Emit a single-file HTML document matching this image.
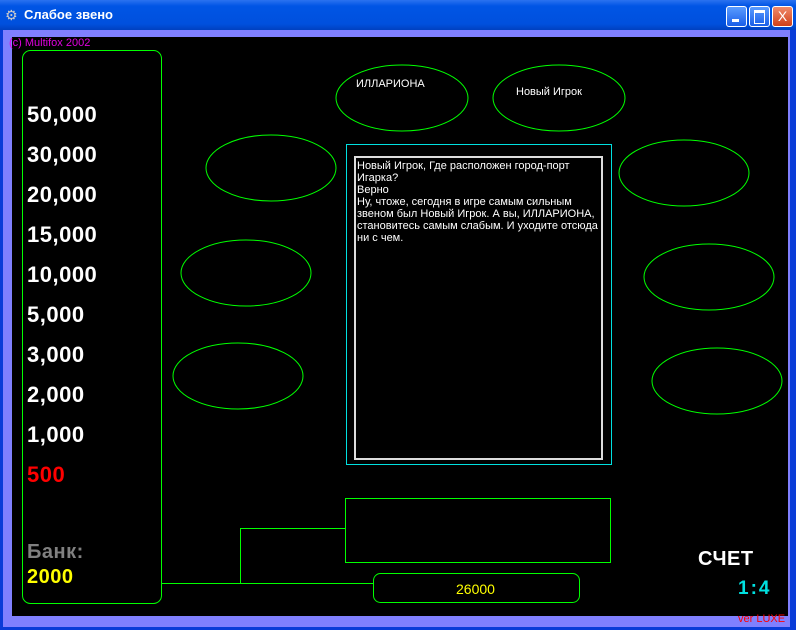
<!DOCTYPE html>
<html><head><meta charset="utf-8"><style>
*{margin:0;padding:0}
body{width:796px;height:630px;overflow:hidden;background:#0a3cd8;position:relative;font-family:"Liberation Sans","DejaVu Sans",sans-serif}
.t{position:absolute;white-space:nowrap}
#title{position:absolute;left:0;top:0;width:796px;height:30px;background:linear-gradient(#2a72f0,#0055e5 20%,#0050dd 80%,#0040c0)}
#frame{position:absolute;left:3px;top:30px;width:787px;height:597px;background:#8080ff}
#black{position:absolute;left:12px;top:37px;width:776px;height:579px;background:#000}
.num{position:absolute;left:27px;font-weight:bold;font-size:22px;color:#fff;line-height:26px;letter-spacing:0.5px}
.btn{position:absolute;top:6px;width:19px;height:19px;border:1px solid #fff;border-radius:3px;background:linear-gradient(#5a9cff,#1a5ee8)}
</style></head><body>
<div id="title"></div>
<div class="t" style="left:5px;top:7px;color:#ccc;font-size:14px">⚙</div>
<div class="t" style="left:24px;top:7px;color:#fff;font-size:13px;font-weight:bold">Слабое звено</div>
<div class="btn" style="left:726px"><div style="position:absolute;left:5px;top:12px;width:7px;height:3px;background:#fff"></div></div>
<div class="btn" style="left:749px"><div style="position:absolute;left:4px;top:3px;width:9px;height:10px;border:1px solid #fff;border-top-width:3px"></div></div>
<div class="btn" style="left:772px;background:linear-gradient(#f08a6a,#d0401a);color:#fff;font-size:14px;text-align:center;line-height:19px">X</div>
<div id="frame"></div>
<div id="black"></div>
<div class="t" style="left:9px;top:37px;color:#e000e0;font-size:11px">(c) Multifox 2002</div>
<svg width="796" height="630" style="position:absolute;left:0;top:0" fill="none" stroke="#00ff00" stroke-width="1">
<rect x="22.5" y="50.5" width="139" height="553" rx="8"/>
<polyline points="161.5,583.5 373,583.5"/>
<polyline points="240.5,583 240.5,528.5 345,528.5"/>
<rect x="345.5" y="498.5" width="265" height="64"/>
<rect x="373.5" y="573.5" width="206" height="29" rx="7"/>
<ellipse cx="402" cy="98" rx="66" ry="33"/>
<ellipse cx="559" cy="98" rx="66" ry="33"/>
<ellipse cx="271" cy="168" rx="65" ry="33"/>
<ellipse cx="246" cy="273" rx="65" ry="33"/>
<ellipse cx="238" cy="376" rx="65" ry="33"/>
<ellipse cx="684" cy="173" rx="65" ry="33"/>
<ellipse cx="709" cy="277" rx="65" ry="33"/>
<ellipse cx="717" cy="381" rx="65" ry="33"/>
<rect x="346.5" y="144.5" width="265" height="320" stroke="#00e0e0"/>
<rect x="355" y="157" width="247" height="302" stroke="#ddd" stroke-width="2"/>
</svg>
<div class="t" style="left:356px;top:78px;color:#fff;font-size:11px">ИЛЛАРИОНА</div>
<div class="t" style="left:516px;top:86px;color:#fff;font-size:11px">Новый Игрок</div>
<div class="t" style="left:357px;top:160px;color:#fff;font-size:11px;line-height:12px;white-space:normal;width:248px">Новый Игрок, Где расположен город-порт Игарка?<br>Верно<br>Ну, чтоже, сегодня в игре самым сильным звеном был Новый Игрок. А вы, ИЛЛАРИОНА, становитесь самым слабым. И уходите отсюда ни с чем.</div>
<div class="num" style="top:102px">50,000</div>
<div class="num" style="top:142px">30,000</div>
<div class="num" style="top:182px">20,000</div>
<div class="num" style="top:222px">15,000</div>
<div class="num" style="top:262px">10,000</div>
<div class="num" style="top:302px">5,000</div>
<div class="num" style="top:342px">3,000</div>
<div class="num" style="top:382px">2,000</div>
<div class="num" style="top:422px">1,000</div>
<div class="num" style="top:462px;color:#ff0000">500</div>
<div class="num" style="top:539px;color:#808080;font-size:20px">Банк:</div>
<div class="num" style="top:564px;color:#ffff00;font-size:20px">2000</div>
<div class="t" style="left:456px;top:581px;color:#ffff00;font-size:14px">26000</div>
<div class="t" style="left:698px;top:548px;color:#fff;font-size:20px;font-weight:bold;letter-spacing:0.5px">СЧЕТ</div>
<div class="t" style="left:738px;top:578px;color:#00e0e0;font-size:19px;font-weight:bold;letter-spacing:2px">1:4</div>
<div class="t" style="left:738px;top:613px;color:#ff0000;font-size:11px">ver LUXE</div>
</body></html>
